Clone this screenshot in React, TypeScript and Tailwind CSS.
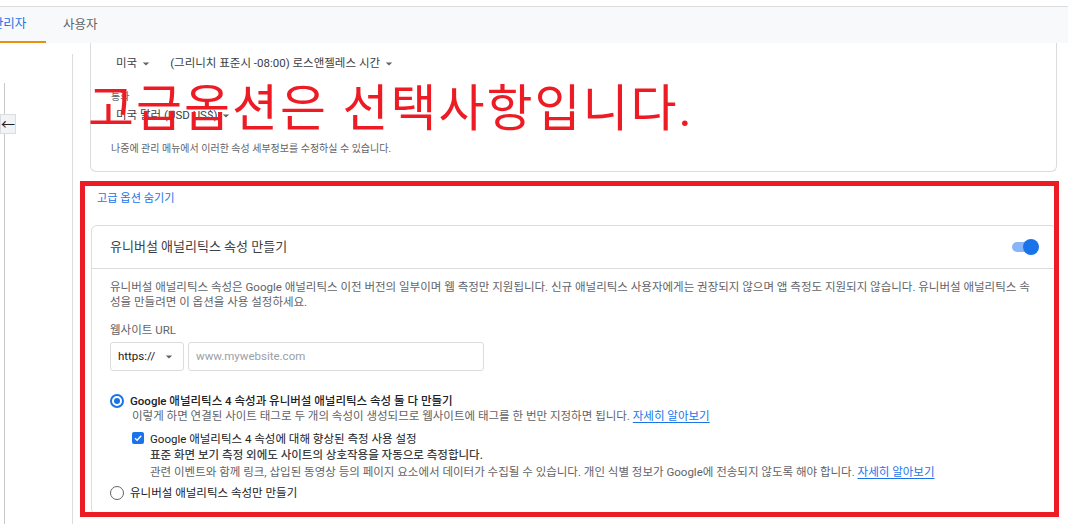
import React from "react";

const Caret = () => (
  <svg width="8" height="8" viewBox="0 0 10 10" className="ml-[5px] inline-block">
    <path d="M1 3 L5 7 L9 3 Z" fill="#5f6368" />
  </svg>
);

function LearnMore() {
  return <a className="text-[#1a73e8] underline underline-offset-2">자세히 알아보기</a>;
}

export default function App() {
  return (
    <div className="relative w-[1068px] h-[524px] overflow-hidden bg-white font-['Roboto','Noto_Sans_CJK_KR',sans-serif] text-[#3c4043]">
      <div className="h-[6px]" />
      {/* tabs */}
      <div className="flex h-[37px] border-t border-[#dadce0] bg-[#f8f9fa] text-[12.5px]">
        <div className="-ml-[28px] w-[74px] flex items-center justify-center text-[#1a73e8] border-b-2 border-[#e8900c]">
          관리자
        </div>
        <div className="ml-[17px] flex items-center text-[#5f6368]">사용자</div>
      </div>

      <div className="flex h-[481px]">
        {/* left nav */}
        <div className="w-[73px] shrink-0 mt-[11px] border-r border-[#dadce0] flex flex-col">
          <div className="ml-[4px] mt-[29px] flex-1 border-l border-[#c8c8c8] flex flex-col">
            <div className="-ml-[5px] mt-[31px] w-[16px] h-[20px] bg-[#f1f3f4] border border-[#dadce0] flex items-center justify-center text-[#202124] text-[14px] leading-none">
              ←
            </div>
          </div>
        </div>

        {/* content */}
        <div className="flex-1 pl-[17px] pr-[11px]">
          {/* property details card */}
          <div className="h-[129px] border-x border-b border-[#dadce0] rounded-b-[6px] pl-[20px] pt-[11px]">
            <div className="flex items-center h-[20px] text-[11.5px] text-[#3c4043]">
              <span className="ml-[5px] flex items-center">미국<Caret /></span>
              <span className="ml-[20px] flex items-center">(그리니치 표준시 -08:00) 로스앤젤레스 시간<Caret /></span>
            </div>
            <div className="mt-[16px] text-[10px] text-[#5f6368] leading-[14px]">통화</div>
            <div className="mt-[2px] ml-[5px] flex items-center h-[20px] text-[11.5px]">
              미국 달러 (USD US$)<Caret />
            </div>
            <div className="mt-[16px] text-[10px] text-[#5f6368] leading-[14px]">
              나중에 관리 메뉴에서 이러한 속성 세부정보를 수정하실 수 있습니다.
            </div>
          </div>

          <div className="mt-[20px] ml-[7px] h-[14px] leading-[14px] text-[11.2px] text-[#1a73e8]">고급 옵션 숨기기</div>

          {/* advanced card */}
          <div className="mt-[19px] ml-[1px] border border-[#dadce0] rounded-[6px]">
            <div className="h-[43px] flex items-center justify-between pl-[18px] pr-[17px] border-b border-[#dadce0]">
              <span className="text-[13px] text-[#3c4043]">유니버설 애널리틱스 속성 만들기</span>
              <div className="relative w-[27px] h-[16px] flex items-center">
                <div className="w-[24px] h-[10px] rounded-full bg-[#8ab4f8]" />
                <div className="absolute right-0 top-0 w-[16px] h-[16px] rounded-full bg-[#1a73e8]" />
              </div>
            </div>
            <div className="pl-[18px] pt-[11px] pb-[14px] text-[11.5px]">
              <div className="leading-[15px] text-[#5f6368] whitespace-nowrap">
                <div>유니버설 애널리틱스 속성은 Google 애널리틱스 이전 버전의 일부이며 웹 측정만 지원됩니다. 신규 애널리틱스 사용자에게는 권장되지 않으며 앱 측정도 지원되지 않습니다. 유니버설 애널리틱스 속</div>
                <div>성을 만들려면 이 옵션을 사용 설정하세요.</div>
              </div>
              <div className="mt-[13px] leading-[14px] text-[#5f6368]">웹사이트 URL</div>
              <div className="mt-[5px] flex gap-[4px]">
                <div className="w-[74px] h-[29px] border border-[#dadce0] rounded-[3px] flex items-center justify-between pl-[7px] pr-[10px] text-[#202124]">
                  https://
                  <svg width="8" height="8" viewBox="0 0 10 10"><path d="M1 3 L5 7 L9 3 Z" fill="#5f6368" /></svg>
                </div>
                <div className="w-[296px] h-[29px] border border-[#dadce0] rounded-[3px] flex items-center pl-[7px] text-[#9aa0a6]">
                  www.mywebsite.com
                </div>
              </div>

              {/* option 1 */}
              <div className="mt-[23px] flex items-start">
                <div className="w-[14px] h-[14px] rounded-full border-2 border-[#1a73e8] flex items-center justify-center">
                  <div className="w-[6px] h-[6px] rounded-full bg-[#1a73e8]" />
                </div>
                <div className="ml-[6px]">
                  <div className="leading-[14px] text-[#202124] font-medium">Google 애널리틱스 4 속성과 유니버설 애널리틱스 속성 둘 다 만들기</div>
                  <div className="mt-[1px] ml-[2px] leading-[15px] text-[#5f6368]">
                    이렇게 하면 연결된 사이트 태그로 두 개의 속성이 생성되므로 웹사이트에 태그를 한 번만 지정하면 됩니다. <LearnMore />
                  </div>
                  <div className="mt-[8px] ml-[2px] flex items-start">
                    <div className="w-[12px] h-[12px] rounded-[2px] bg-[#1a73e8] flex items-center justify-center">
                      <svg width="10" height="10" viewBox="0 0 10 10"><path d="M2 5.2 L4.1 7.2 L8.2 2.8" stroke="white" strokeWidth="1.4" fill="none" /></svg>
                    </div>
                    <div className="ml-[6px]">
                      <div className="leading-[14px] text-[#202124]">Google 애널리틱스 4 속성에 대해 향상된 측정 사용 설정</div>
                      <div className="mt-[1px] leading-[16px] text-[#3c4043] font-medium">표준 화면 보기 측정 외에도 사이트의 상호작용을 자동으로 측정합니다.</div>
                      <div className="mt-[1px] leading-[16px] text-[#5f6368]">
                        관련 이벤트와 함께 링크, 삽입된 동영상 등의 페이지 요소에서 데이터가 수집될 수 있습니다. 개인 식별 정보가 Google에 전송되지 않도록 해야 합니다. <LearnMore />
                      </div>
                    </div>
                  </div>
                </div>
              </div>

              {/* option 2 */}
              <div className="mt-[6px] flex items-center">
                <div className="w-[14px] h-[14px] rounded-full border-[1.5px] border-[#5f6368]" />
                <div className="ml-[6px] leading-[14px] text-[#202124]">유니버설 애널리틱스 속성만 만들기</div>
              </div>
            </div>
          </div>
        </div>
      </div>

      {/* annotation overlays */}
      <div className="absolute left-[88px] top-[78px] text-[50px] leading-[62px] tracking-[2px] text-[#ed1c24] whitespace-nowrap">
        고급옵션은 선택사항입니다.
      </div>
      <div className="absolute left-[80px] top-[181px] w-[979px] h-[336px] border-[5px] border-[#ed1c24]" />
    </div>
  );
}
